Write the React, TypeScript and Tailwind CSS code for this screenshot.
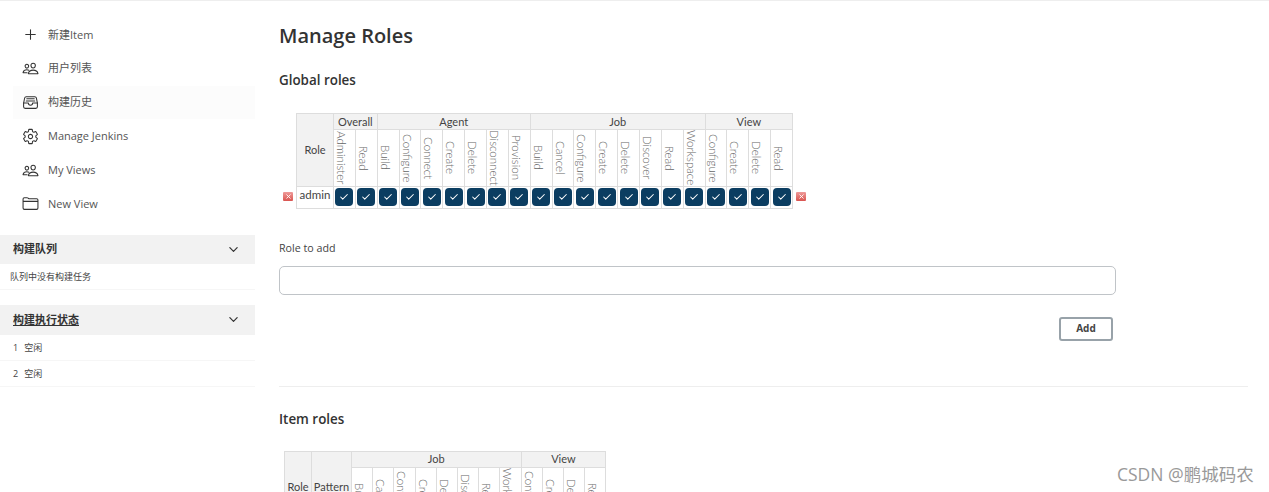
import { Check, X } from "lucide-react";
import {
  IoAddOutline,
  IoChevronDownOutline,
  IoFileTrayFullOutline,
  IoFolderOutline,
  IoPeopleOutline,
  IoSettingsOutline,
} from "react-icons/io5";

const navItems = [
  { icon: IoAddOutline, label: "新建Item" },
  { icon: IoPeopleOutline, label: "用户列表" },
  { icon: IoFileTrayFullOutline, label: "构建历史", active: true },
  { icon: IoSettingsOutline, label: "Manage Jenkins" },
  { icon: IoPeopleOutline, label: "My Views" },
  { icon: IoFolderOutline, label: "New View" },
];

const globalGroups = [
  { name: "Overall", perms: ["Administer", "Read"] },
  {
    name: "Agent",
    perms: ["Build", "Configure", "Connect", "Create", "Delete", "Disconnect", "Provision"],
  },
  {
    name: "Job",
    perms: ["Build", "Cancel", "Configure", "Create", "Delete", "Discover", "Read", "Workspace"],
  },
  { name: "View", perms: ["Configure", "Create", "Delete", "Read"] },
];

const itemGroups = globalGroups.slice(2);

function DeleteIcon() {
  return (
    <span className="flex h-[9px] w-[10px] items-center justify-center rounded-[1px] bg-gradient-to-b from-[#ee9a9a] to-[#d9534f]">
      <X size={7} strokeWidth={3} className="text-white" />
    </span>
  );
}

function CheckBox() {
  return (
    <span className="mx-auto flex h-[18px] w-[18px] items-center justify-center rounded-[4px] bg-[#0b3d61]">
      <Check size={10} strokeWidth={2.5} className="text-white" />
    </span>
  );
}

type Group = { name: string; perms: string[] };

type RoleTableProps = {
  groups: Group[];
  pattern?: boolean;
  role?: string;
  roleWidth: string;
  colWidth: string;
};

function RoleTable({ groups, pattern, role, roleWidth, colWidth }: RoleTableProps) {
  const perms = groups.flatMap((g) => g.perms);
  return (
    <table className="border-collapse font-['Lato','Noto_Sans_CJK_SC',sans-serif] text-[11px] leading-[14px] text-[#444]">
      <thead>
        <tr className="h-[16px] bg-[#f2f2f2]">
          <th rowSpan={2} className={`border border-[#ddd] p-0 font-normal ${roleWidth}`}>Role</th>
          {pattern && <th rowSpan={2} className="w-[40px] border border-[#ddd] p-0 font-normal">Pattern</th>}
          {groups.map((g) => (
            <th key={g.name} colSpan={g.perms.length} className="border border-[#ddd] p-0 font-normal">
              {g.name}
            </th>
          ))}
        </tr>
        <tr className="h-[56px]">
          {perms.map((p, i) => (
            <th key={i} className={`border border-[#ddd] p-0 text-[11.5px] font-light text-[#666] ${colWidth}`}>
              <span className="mx-auto block w-fit text-center leading-[14px] whitespace-nowrap [writing-mode:vertical-rl]">
                {p}
              </span>
            </th>
          ))}
        </tr>
      </thead>
      {role && (
        <tbody>
          <tr className="h-[22px]">
            <td className="border border-[#ddd] p-0 pt-[1px] text-center align-top text-[11.5px]">{role}</td>
            {perms.map((_, i) => (
              <td key={i} className="border border-[#ddd] p-0">
                <CheckBox />
              </td>
            ))}
          </tr>
        </tbody>
      )}
    </table>
  );
}

export default function App() {
  return (
    <div className="relative flex h-[492px] overflow-hidden border-t border-[#eee] bg-white font-['Open_Sans','Noto_Sans_CJK_SC',sans-serif] text-[#333]">
      {/* Sidebar */}
      <aside className="w-[255px] shrink-0">
        <nav className="flex flex-col pt-[17px]">
          {navItems.map((item) => (
            <div
              key={item.label}
              className={`ml-[13px] flex h-[33.8px] items-center gap-[9px] pl-[9px] text-[11px] text-[#555] ${item.active ? "bg-[#fcfcfc]" : ""}`}
            >
              <item.icon size={17} className="text-[#333]" />
              <span>{item.label}</span>
            </div>
          ))}
        </nav>

        <section className="mt-[14px]">
          <div className="flex h-[29px] items-center justify-between bg-[#f2f2f2] pl-[13px] pr-[15px] text-[11px] font-semibold">
            <span>构建队列</span>
            <IoChevronDownOutline size={13} />
          </div>
          <div className="flex h-[26px] items-center border-b border-[#f6f6f6] pl-[10px] text-[9px] text-[#444]">
            队列中没有构建任务
          </div>
        </section>

        <section className="mt-[15px]">
          <div className="flex h-[30px] items-center justify-between bg-[#f2f2f2] pl-[13px] pr-[15px] text-[11px] font-semibold">
            <span className="underline">构建执行状态</span>
            <IoChevronDownOutline size={13} />
          </div>
          {["空闲", "空闲"].map((state, i) => (
            <div key={i} className="flex h-[26px] items-center gap-[6px] border-b border-[#f6f6f6] pl-[13px] text-[9px] text-[#444]">
              <span>{i + 1}</span>
              <span>{state}</span>
            </div>
          ))}
        </section>
      </aside>

      {/* Main */}
      <main className="ml-[24px] w-[969px] shrink-0">
        <h1 className="mt-[20px] text-[20px] leading-[30px] font-semibold">Manage Roles</h1>
        <h2 className="mt-[19px] text-[13.4px] leading-[20px] font-semibold">Global roles</h2>

        <div className="mt-[23px] ml-[4px] flex items-end gap-[3px]">
          <div className="pb-[8px]">
            <DeleteIcon />
          </div>
          <RoleTable groups={globalGroups} role="admin" roleWidth="w-[37px]" colWidth="w-[21.86px]" />
          <div className="pb-[8px]">
            <DeleteIcon />
          </div>
        </div>

        <label className="mt-[31px] block text-[10.7px] leading-[16px] text-[#444]">Role to add</label>
        <input className="mt-[10px] block h-[29px] w-[837px] rounded-[5px] border border-[#c0c4c8] bg-white" />
        <div className="mt-[22px] flex w-[834px] justify-end">
          <button className="h-[24px] w-[54px] rounded-[3px] border-2 border-[#98a2a9] text-[10px] font-bold text-[#444]">
            Add
          </button>
        </div>

        <hr className="mt-[45px] border-[#eee]" />

        <h2 className="mt-[22px] text-[13.4px] leading-[20px] font-semibold">Item roles</h2>
        <div className="mt-[22px] ml-[5px]">
          <RoleTable groups={itemGroups} pattern roleWidth="w-[27px]" colWidth="w-[21.2px]" />
        </div>
      </main>

      {/* Watermark */}
      <span className="absolute top-[462px] left-[1117px] text-[17.5px] leading-[22px] whitespace-nowrap text-[#999]">
        CSDN @鹏城码农
      </span>
    </div>
  );
}
